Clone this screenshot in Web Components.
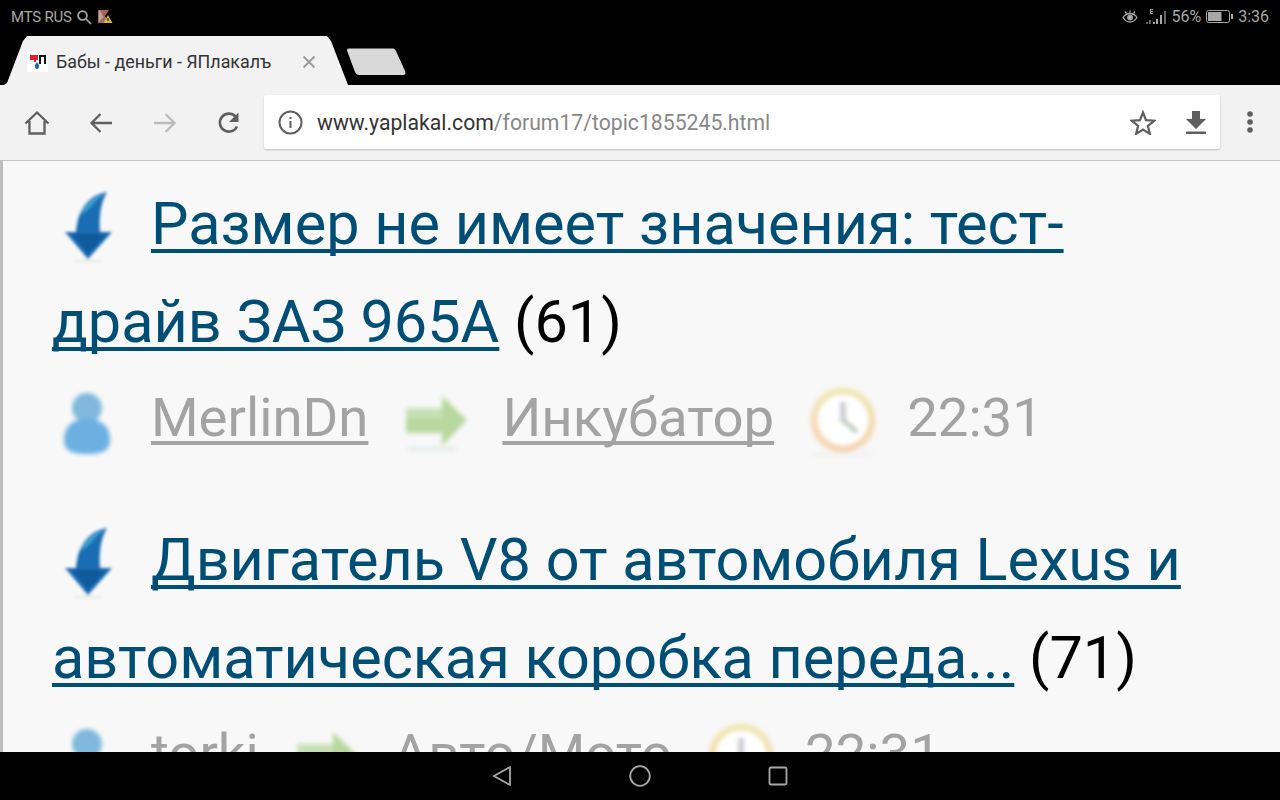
<!DOCTYPE html>
<html lang="ru">
<head>
<meta charset="utf-8">
<title>Бабы - деньги - ЯПлакалъ</title>
<style>
html, body { margin: 0; padding: 0; background: #000; }
body { width: 1280px; height: 800px; overflow: hidden; font-family: Roboto, "Liberation Sans", sans-serif; }
</style>
</head>
<body>
<phone-shell>
  <status-bar slot="top"></status-bar>
  <tab-strip slot="top" title-text="Бабы - деньги - ЯПлакалъ"></tab-strip>
  <browser-toolbar slot="top" host-part="www.yaplakal.com" path-part="/forum17/topic1855245.html"></browser-toolbar>
  <topic-item count="(61)" author="MerlinDn" forum="Инкубатор" time="22:31">Размер не имеет значения: тест-драйв ЗАЗ 965А</topic-item>
  <topic-item count="(71)" author="torki" forum="Авто/Мото" time="22:31">Двигатель V8 от автомобиля Lexus и автоматическая коробка переда...</topic-item>
  <nav-bar slot="bottom"></nav-bar>
</phone-shell>

<script>
// blurred forum icons, the originals are small gifs scaled up
const ICONS = {
  arrowDown: `<svg width="64" height="76" viewBox="0 0 64 76">
    <path d="M55 4C40 6 26 18 24 44H13L36 71 60 44H48C47 30 48 16 55 4Z" fill="#1a6cb4"/>
    <path d="M55 4C44 7 32 15 27 28L38 20C42 14 48 9 55 4Z" fill="#3f9fd0"/>
    <path d="M20 46H54L36 66Z" fill="#0f5a9c"/>
    <path d="M22 73H50" stroke="#e6ecdc" stroke-width="2"/>
  </svg>`,
  user: `<svg width="64" height="72" viewBox="0 0 64 72">
    <circle cx="35" cy="18" r="15" fill="#7fb8dc"/>
    <path d="M12 50C12 36 21 29 35 29S58 36 58 50C58 62 48 64 35 64S12 62 12 50Z" fill="#6cb0e2"/>
  </svg>`,
  arrowRight: `<svg width="66" height="64" viewBox="0 0 66 64">
    <path d="M2 14H38V2L63 26 38 52V39H2Z" fill="#b8d8a0"/>
    <path d="M2 14H38V24H2Z" fill="#c8e0b4"/>
    <path d="M4 55H52" stroke="#dfe8e2" stroke-width="3"/>
  </svg>`,
  clock: `<svg width="70" height="70" viewBox="0 0 70 70">
    <defs><linearGradient id="ring" x1="0" y1="0" x2="0" y2="1"><stop offset="0" stop-color="#f1e6b4"/><stop offset="1" stop-color="#f5d3b4"/></linearGradient></defs>
    <circle cx="34" cy="32" r="29" fill="#fff" stroke="url(#ring)" stroke-width="7"/>
    <path d="M34 14V34" stroke="#cfcbd9" stroke-width="6"/>
    <path d="M34 32L48 44" stroke="#b3c6b3" stroke-width="4"/>
    <path d="M4 66H64" stroke="#eff2ed" stroke-width="3"/>
  </svg>`
};

class PhoneShell extends HTMLElement {
  constructor() {
    super();
    this.shadowDOM = this.attachShadow({mode: "open"});
    this.shadowDOM.innerHTML = `
    <style>
      :host { display: flex; flex-direction: column; width: 1280px; height: 800px; background: #000; }
      main {
        flex: 1; min-height: 0; overflow: hidden;
        background: #f8f8f8; border-left: 3px solid #bdbdbd;
        padding: 14px 0 0 49px;
      }
    </style>
    <slot name="top"></slot>
    <main><slot></slot></main>
    <slot name="bottom"></slot>`;
  }
}

class StatusBar extends HTMLElement {
  constructor() {
    super();
    this.shadowDOM = this.attachShadow({mode: "open"});
    this.shadowDOM.innerHTML = `
    <style>
      :host {
        display: flex; align-items: center; height: 33px; padding: 0 11px;
        color: #a8a8a8; font-size: 15px; letter-spacing: -.2px; background: #000;
      }
      .left, .right { display: flex; align-items: center; }
      .right { margin-left: auto; font-size: 16px; letter-spacing: 0; }
      svg { display: block; }
    </style>
    <div class="left">
      <span>MTS RUS</span>
      <svg width="16" height="16" viewBox="0 0 16 16" fill="none" stroke="#a8a8a8" stroke-width="1.7" style="margin-left:4px"><circle cx="6.5" cy="6.5" r="4.4"/><path d="M10 10l5 5"/></svg>
      <svg width="16" height="15" viewBox="0 0 16 15" style="margin-left:5px"><path d="M1 1h11L8 7l4 7H1z" fill="#a06a5c"/><path d="M2 1l5 6-5 6z" fill="#b8a6a0"/><path d="M11 1L6 8l-1-3z" fill="#c9503c"/><path d="M11 6l4.5 8h-9z" fill="#d9b640"/><path d="M11 9v3" stroke="#222" stroke-width="1.2"/></svg>
    </div>
    <div class="right">
      <svg width="16" height="14" viewBox="0 0 16 14" fill="none" stroke="#a8a8a8" stroke-width="1.3"><path d="M1 7.5C3 4.5 5 3.5 8 3.5s5 1 7 4c-2 3-4 4.500-7 4.500S3 10.500 1 7.500Z"/><circle cx="8" cy="7.500" r="2.300" fill="#a8a8a8"/><path d="M3 1.500l1.500 2M8 .5v2M13 1.500l-1.500 2"/></svg>
      <svg width="23" height="18" viewBox="0 0 23 18" style="margin-left:7px" fill="#a8a8a8"><path d="M5 1h3v1H6v1h2v1H6v1h2v1H5z"/><rect x="1" y="14" width="2" height="2" opacity=".6"/><rect x="4" y="12" width="2" height="4" opacity=".6"/><rect x="8" y="14" width="2" height="2"/><rect x="11" y="11" width="2" height="5"/><rect x="15" y="7" width="2" height="9"/><rect x="19" y="3" width="2" height="13" opacity=".6"/></svg>
      <span style="margin-left:3px">56%</span>
      <svg width="28" height="13" viewBox="0 0 28 13" style="margin-left:5px"><rect x=".5" y=".5" width="23" height="12" rx="2" fill="none" stroke="#a8a8a8"/><rect x="2" y="2" width="13.500" height="9" fill="#a8a8a8"/><rect x="25" y="4" width="2" height="5" fill="#a8a8a8"/></svg>
      <span style="margin-left:4px">3:36</span>
    </div>`;
  }
}

class TabStrip extends HTMLElement {
  constructor() {
    super();
    this.shadowDOM = this.attachShadow({mode: "open"});
    this.shadowDOM.innerHTML = `
    <style>
      :host { display: flex; align-items: flex-end; height: 52px; padding-left: 4px; background: #000; box-sizing: border-box; }
      .tab {
        display: flex; align-items: center; width: 344px; height: 49px; box-sizing: border-box;
        padding: 2px 0 0 23px; background: #f2f2f2; color: #333; font-size: 17.85px;
        clip-path: polygon(0 100%, 3px 96%, 19px 5px, 23px 0, 323px 0, 327px 5px, 344px 100%);
      }
      .title { margin-left: 8px; white-space: nowrap; }
      .close { margin-left: 31px; }
      .new { display: block; margin: 0 0 9px -3px; }
      svg { display: block; flex: none; }
    </style>
    <div class="tab">
      <svg width="21" height="21" viewBox="0 0 21 21"><rect width="21" height="21" fill="#fff"/><path d="M3 4h8v5H9v2H7V9H3z" fill="#e8202a"/><path d="M12 4h7v9h-2V6h-3v7h-2z" fill="#111"/><path d="M10 11l2 3v2a2 2 0 0 1-4 0v-2z" fill="#1a6aa8"/></svg>
      <span class="title">${this.getAttribute("title-text")}</span>
      <svg class="close" width="14" height="14" viewBox="0 0 14 14" stroke="#999" stroke-width="1.800"><path d="M1.500 1.500l11 11M12.500 1.500l-11 11"/></svg>
    </div>
    <svg class="new" width="62" height="28" viewBox="0 0 62 28"><path d="M2 2.500C2 1 3 .5 4 .5H47C49 .5 50 1 51 3L60 23C61 26 60 27 58 27H14C12 27 11 26 10 24Z" fill="#d8d8d8"/></svg>`;
  }
}

class BrowserToolbar extends HTMLElement {
  constructor() {
    super();
    this.shadowDOM = this.attachShadow({mode: "open"});
    this.shadowDOM.innerHTML = `
    <style>
      :host {
        display: flex; align-items: center; height: 76px; box-sizing: border-box;
        background: #f2f2f2; border-bottom: 1px solid #c4c4c4; padding: 0 0 1px 0;
      }
      .btns { display: flex; width: 264px; flex: none; padding: 2px 0 0 5px; box-sizing: border-box; }
      .btn { width: 64px; display: flex; justify-content: center; align-items: center; }
      .omni {
        display: flex; align-items: center; width: 956px; height: 54px; box-sizing: border-box; flex: none;
        background: #fff; border-radius: 2px; box-shadow: 0 1px 2px rgba(0,0,0,.22);
        padding: 0 13px 0 14px; font-size: 21.2px; white-space: nowrap;
      }
      .host { color: #333; margin-left: 14px; }
      .path { color: #888; }
      .omni-end { margin-left: auto; display: flex; align-items: center; gap: 30px; }
      .menu { flex: 1; display: flex; justify-content: center; }
      svg { display: block; }
    </style>
    <div class="btns">
      <div class="btn"><svg width="26" height="26" viewBox="0 0 26 26" fill="none" stroke="#5f5f5f" stroke-width="2.300"><path d="M1.500 13.500L13 2.500l11.500 11M5.500 11v12.500h15V11"/></svg></div>
      <div class="btn"><svg width="24" height="22" viewBox="0 0 24 22" fill="none" stroke="#5f5f5f" stroke-width="2.300"><path d="M23 11H3M11.500 2L2.500 11l9 9"/></svg></div>
      <div class="btn"><svg width="24" height="22" viewBox="0 0 24 22" fill="none" stroke="#bcbcbc" stroke-width="2.300"><path d="M1 11h20M12.500 2l9 9-9 9"/></svg></div>
      <div class="btn"><svg width="24" height="24" viewBox="0 0 24 24" fill="none" stroke="#5f5f5f" stroke-width="2.600"><path d="M20 15.500A9 9 0 1 1 18.500 5.500"/><path d="M21.500 1.500v9.500h-9.500z" fill="#5f5f5f" stroke="none"/></svg></div>
    </div>
    <div class="omni">
      <svg width="25" height="25" viewBox="0 0 25 25" fill="none" stroke="#5f5f5f" stroke-width="2"><circle cx="12.500" cy="12.500" r="11"/><path d="M12.500 11v7M12.500 7v2"/></svg>
      <span class="host">${this.getAttribute("host-part")}</span><span class="path">${this.getAttribute("path-part")}</span>
      <div class="omni-end">
        <svg width="26" height="25" viewBox="0 0 26 25" fill="none" stroke="#5f5f5f" stroke-width="2.200" stroke-linejoin="miter"><path d="M13 2.500l3 7.600 8.200.6-6.300 5.200 2 8-6.900-4.400-6.900 4.400 2-8L1.800 10.700l8.200-.6z"/></svg>
        <svg width="20" height="23" viewBox="0 0 20 23" fill="#5f5f5f" style="margin-right:1px"><path d="M6 0h8v8h6L10 18 0 8h6z"/><rect y="20.500" width="20" height="2.500"/></svg>
      </div>
    </div>
    <div class="menu"><svg width="6" height="22" viewBox="0 0 6 22" fill="#5f5f5f"><circle cx="3" cy="3" r="2.800"/><circle cx="3" cy="11" r="2.800"/><circle cx="3" cy="19" r="2.800"/></svg></div>`;
  }
}

class TopicItem extends HTMLElement {
  constructor() {
    super();
    this.shadowDOM = this.attachShadow({mode: "open"});
    this.shadowDOM.innerHTML = `
    <style>
      :host { display: block; width: 1180px; padding-bottom: 42px; font-family: Roboto, "Liberation Sans", sans-serif; }
      .head, .meta { line-height: 98px; font-size: 59.4px; filter: blur(.45px); }
      .head { color: #000; }
      a { color: #004e75; text-decoration: underline; text-decoration-thickness: 4px; text-underline-offset: 5px; text-decoration-skip-ink: none; }
      .meta {
        display: flex; align-items: center; height: 98px; box-sizing: border-box; padding-bottom: 6px;
        font-size: 54.5px; color: #a3a3a3; white-space: nowrap;
      }
      .meta a { color: #a3a3a3; }
      .ico { display: inline-block; vertical-align: -20px; filter: blur(1.5px); width: 99px; }
      .ico svg { display: block; }
      .meta .ico { flex: none; margin-top: 18px; filter: blur(2px); }
      .go { padding-left: 36px; width: 98px; }
      .meta .clk { padding-left: 35px; width: 98px; margin-top: 12px; }
    </style>
    <div class="head"><span class="ico" id="a"></span><a><slot></slot></a> ${this.getAttribute("count")}</div>
    <div class="meta">
      <span class="ico" id="u"></span><a>${this.getAttribute("author")}</a>
      <span class="ico go" id="g"></span><a>${this.getAttribute("forum")}</a>
      <span class="ico clk" id="c"></span><span>${this.getAttribute("time")}</span>
    </div>`;
    this.shadowDOM.getElementById("a").innerHTML = ICONS.arrowDown;
    this.shadowDOM.getElementById("u").innerHTML = ICONS.user;
    this.shadowDOM.getElementById("g").innerHTML = ICONS.arrowRight;
    this.shadowDOM.getElementById("c").innerHTML = ICONS.clock;
  }
}

class NavBar extends HTMLElement {
  constructor() {
    super();
    this.shadowDOM = this.attachShadow({mode: "open"});
    this.shadowDOM.innerHTML = `
    <style>
      :host { display: flex; justify-content: center; align-items: center; gap: 117px; height: 48px; background: #000; flex: none; }
      svg { display: block; }
    </style>
    <svg width="20" height="22" viewBox="0 0 20 22" fill="none" stroke="#a8a8a8" stroke-width="1.800" stroke-linejoin="round"><path d="M18 2v18L2 11z"/></svg>
    <svg width="22" height="22" viewBox="0 0 22 22" fill="none" stroke="#a8a8a8" stroke-width="1.800"><circle cx="11" cy="11" r="9.800"/></svg>
    <svg width="20" height="20" viewBox="0 0 20 20" fill="none" stroke="#a8a8a8" stroke-width="1.800"><rect x="1.500" y="1.500" width="17" height="17" rx="1.500"/></svg>`;
  }
}

customElements.define("phone-shell", PhoneShell);
customElements.define("status-bar", StatusBar);
customElements.define("tab-strip", TabStrip);
customElements.define("browser-toolbar", BrowserToolbar);
customElements.define("topic-item", TopicItem);
customElements.define("nav-bar", NavBar);
</script>
</body>
</html>
